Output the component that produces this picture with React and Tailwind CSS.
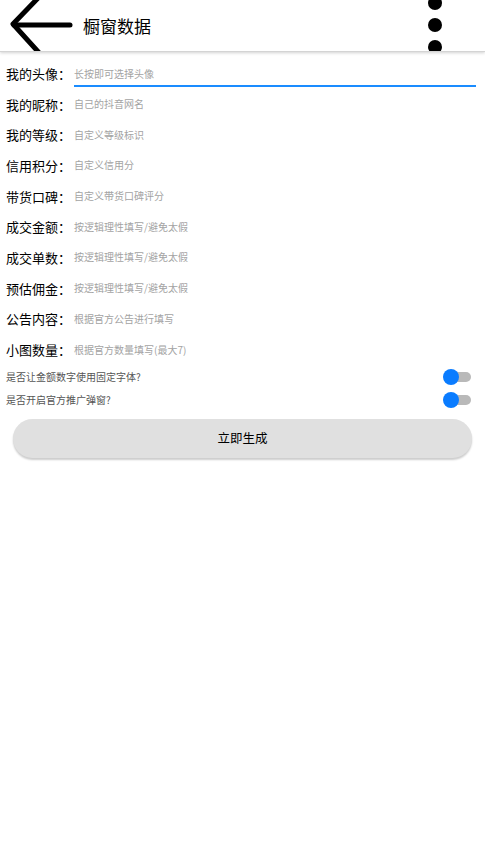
import React from 'react';

const fields = [
  ['我的头像：', '长按即可选择头像'],
  ['我的昵称：', '自己的抖音网名'],
  ['我的等级：', '自定义等级标识'],
  ['信用积分：', '自定义信用分'],
  ['带货口碑：', '自定义带货口碑评分'],
  ['成交金额：', '按逻辑理性填写/避免太假'],
  ['成交单数：', '按逻辑理性填写/避免太假'],
  ['预估佣金：', '按逻辑理性填写/避免太假'],
  ['公告内容：', '根据官方公告进行填写'],
  ['小图数量：', '根据官方数量填写(最大7)'],
];

const toggles = ['是否让金额数字使用固定字体?', '是否开启官方推广弹窗?'];

const Toggle = () => (
  <div className="relative w-[28px] h-[16px] flex items-center">
    <div className="absolute right-0 w-[22px] h-[10px] rounded-full bg-[#b9b9b9]" />
    <div className="absolute left-0 w-[16px] h-[16px] rounded-full bg-[#0a7cff]" />
  </div>
);

export default function App() {
  return (
    <div className="w-[485px] h-[851px] bg-white" style={{ fontFamily: '"Noto Sans CJK SC", "Noto Sans", sans-serif' }}>
      {/* toolbar */}
      <div className="relative h-[52px] overflow-hidden border-b border-[#d4d4d4] shadow-[0_1px_3px_rgba(0,0,0,0.18)] flex items-center">
        <svg className="absolute left-0 top-0" width="80" height="52" viewBox="0 0 80 52">
          <g fill="none" stroke="#000" strokeWidth="5" strokeLinecap="round" strokeLinejoin="round">
            <path d="M70 25 H14" />
            <path d="M40 -4 L13 24 L42 56" />
          </g>
        </svg>
        <span className="ml-[83px] text-[17px] leading-none text-black">橱窗数据</span>
        <div className="absolute left-[428px] top-0 flex flex-col gap-[8px] -mt-[4px]">
          <div className="w-[14px] h-[14px] rounded-full bg-black" />
          <div className="w-[14px] h-[14px] rounded-full bg-black" />
          <div className="w-[14px] h-[14px] rounded-full bg-black" />
        </div>
      </div>

      {/* form */}
      <div className="pt-[6px]">
        {fields.map(([label, hint], i) => (
          <div key={label} className="h-[30.7px] flex items-center pl-[6px] pr-[9px]">
            <span className="text-[13px] text-black leading-none whitespace-nowrap w-[68px]">{label}</span>
            <div className={`flex-1 flex items-center ${i === 0 ? 'h-[25px] border-b-2 border-[#1a8cff] pt-[2px] mt-[2px]' : 'h-[22px]'}`}>
              <span className="text-[10px] text-[#a3a3a3] leading-none">{hint}</span>
            </div>
          </div>
        ))}
      </div>

      <div className="mt-[4px] flex flex-col gap-[7px] pl-[6px] pr-[14px]">
        {toggles.map((t) => (
          <div key={t} className="h-[16px] flex items-center justify-between">
            <span className="text-[10px] text-[#555] leading-none">{t}</span>
            <Toggle />
          </div>
        ))}
      </div>

      <div className="px-[13px] mt-[11px]">
        <button className="w-full h-[39px] rounded-full bg-[#e0e0e0] shadow-[0_2px_2px_rgba(0,0,0,0.2)] text-[12.5px] text-black">
          立即生成
        </button>
      </div>
    </div>
  );
}
